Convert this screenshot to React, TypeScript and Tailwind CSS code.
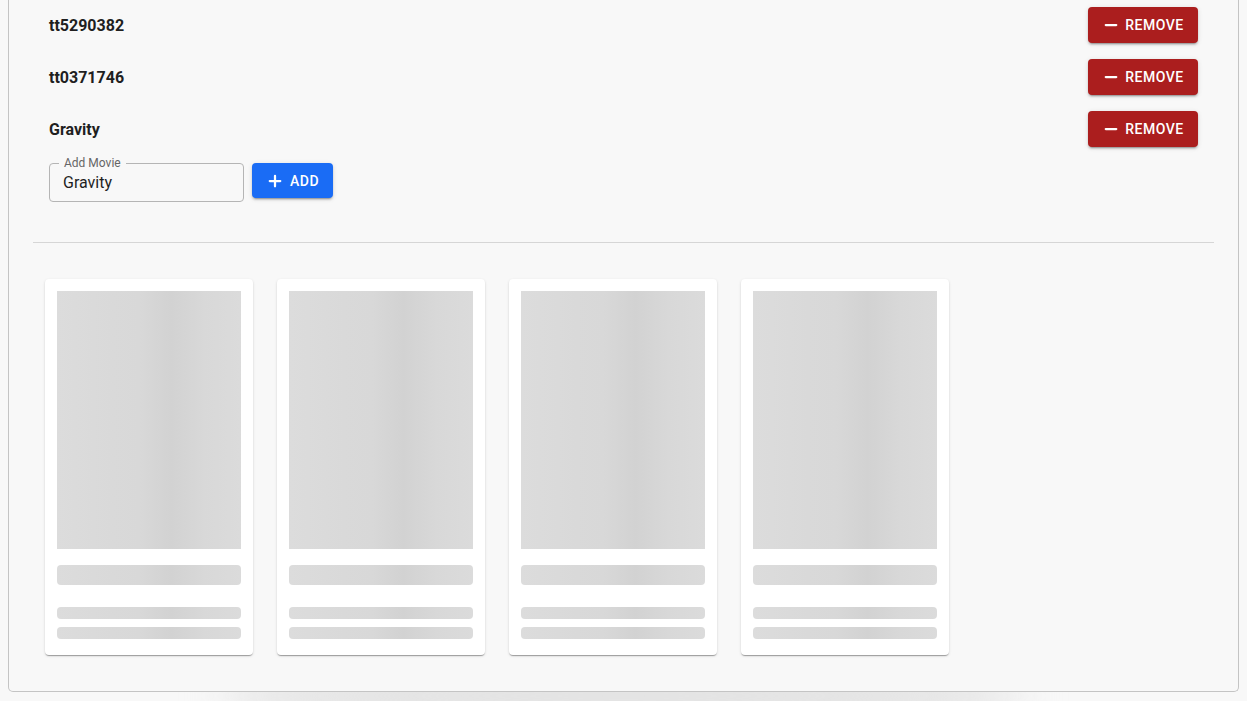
import { Minus, Plus } from 'lucide-react';

const movies = ['tt5290382', 'tt0371746', 'Gravity'];

const skeleton =
  'bg-[linear-gradient(90deg,#dcdcdc_0%,#d9d9d9_30%,#d8d8d8_45%,#d2d2d2_62%,#d8d8d8_80%,#dbdbdb_100%)]';

const raised =
  'shadow-[0_3px_1px_-2px_rgba(0,0,0,0.2),0_2px_2px_0_rgba(0,0,0,0.14),0_1px_5px_0_rgba(0,0,0,0.12)]';

function SkeletonCard() {
  return (
    <div className="flex h-[376px] w-[208px] flex-col rounded-[4px] bg-white px-3 pt-3 shadow-[0_2px_1px_-1px_rgba(0,0,0,0.2),0_1px_1px_0_rgba(0,0,0,0.14),0_1px_3px_0_rgba(0,0,0,0.12)]">
      <div className={`h-[258px] w-full ${skeleton}`} />
      <div className={`mt-4 h-5 w-full rounded-[4px] ${skeleton}`} />
      <div className={`mt-[22px] h-3 w-full rounded-[4px] ${skeleton}`} />
      <div className={`mt-2 h-3 w-full rounded-[4px] ${skeleton}`} />
    </div>
  );
}

export default function App() {
  return (
    <div className="relative h-[701px] overflow-hidden bg-[#f8f8f8] font-['Roboto',sans-serif] text-[#1f1f1f]">
      <div className="pointer-events-none absolute bottom-[-30px] left-[220px] right-[220px] h-[70px] rounded-[50%] bg-[#e2e2e2] blur-[20px]" />
      <div className="relative mx-2 h-[692px] rounded-b-[5px] border-x border-b border-[#c4c4c4] bg-[#f8f8f8] px-6 pt-[7px]">
        <div className="flex flex-col gap-4 px-4">
          {movies.map((m) => (
            <div key={m} className="flex h-9 items-center justify-between">
              <span className="pt-px text-base font-bold">{m}</span>
              <button
                type="button"
                className={`flex h-9 w-[110px] items-center justify-center gap-[5px] rounded-[4px] bg-[#ab1e1e] text-sm font-medium tracking-[0.5px] text-white ${raised}`}
              >
                <Minus className="h-[18px] w-[18px]" strokeWidth={3} />
                REMOVE
              </button>
            </div>
          ))}
          <div className="flex items-start gap-2">
            <div className="relative h-[39px] w-[195px] rounded-[4px] border border-[#b5b5b5]">
              <span className="absolute -top-[9px] left-[9px] bg-[#f8f8f8] px-[5px] text-xs leading-4 text-[#666]">
                Add Movie
              </span>
              <div className="flex h-full items-center px-[13px] pt-px text-base">Gravity</div>
            </div>
            <button
              type="button"
              className={`flex h-[35px] w-[81px] items-center justify-center gap-[6px] rounded-[4px] bg-[#1a6cf5] text-sm font-medium tracking-[0.5px] text-white ${raised}`}
            >
              <Plus className="h-[18px] w-[18px]" strokeWidth={3} />
              ADD
            </button>
          </div>
        </div>
        <div className="mt-10 h-px bg-[#d6d6d6]" />
        <div className="mt-9 flex gap-6 px-3">
          <SkeletonCard />
          <SkeletonCard />
          <SkeletonCard />
          <SkeletonCard />
        </div>
      </div>
    </div>
  );
}
